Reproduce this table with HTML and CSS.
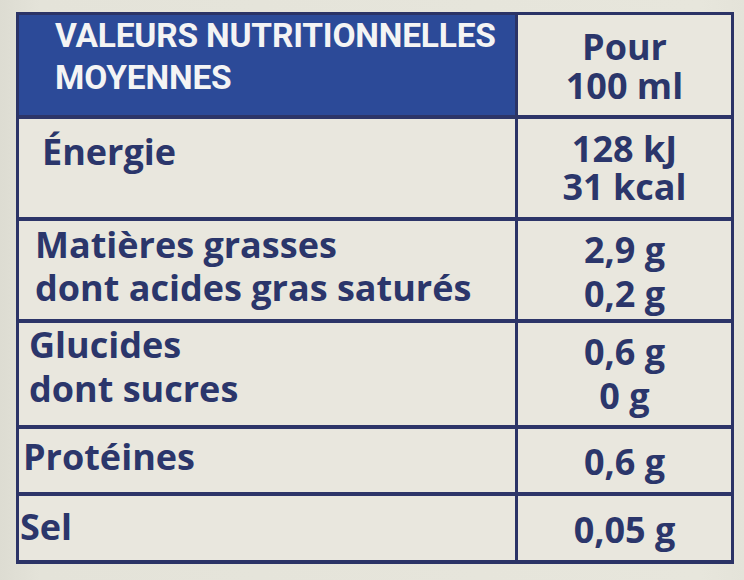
FILE: index.html
```html
<!DOCTYPE html>
<html lang="fr">
<head>
<meta charset="utf-8">
<title>Valeurs nutritionnelles moyennes</title>
<link rel="stylesheet" href="styles.css">
</head>
<body>
<div class="label">
  <div class="row row-head">
    <div class="cell name head-name">VALEURS NUTRITIONNELLES<br>MOYENNES</div>
    <div class="cell value head-value">Pour<br>100 ml</div>
  </div>
  <div class="row row-energy">
    <div class="cell name">Énergie</div>
    <div class="cell value">128 kJ<br>31 kcal</div>
  </div>
  <div class="row row-fat">
    <div class="cell name">Matières grasses<br>dont acides gras saturés</div>
    <div class="cell value">2,9 g<br>0,2 g</div>
  </div>
  <div class="row row-carb">
    <div class="cell name">Glucides<br>dont sucres</div>
    <div class="cell value">0,6 g<br>0 g</div>
  </div>
  <div class="row row-prot">
    <div class="cell name">Protéines</div>
    <div class="cell value">0,6 g</div>
  </div>
  <div class="row row-salt">
    <div class="cell name">Sel</div>
    <div class="cell value">0,05 g</div>
  </div>
</div>
</body>
</html>
```

FILE: styles.css
```css
html, body {
  margin: 0;
  padding: 0;
}
body {
  width: 744px;
  height: 580px;
  overflow: hidden;
  background: linear-gradient(90deg, #dddcd2 0px, #e4e3d9 40px, #e7e6dc 700px, #e4e3d9 744px);
  font-family: "Open Sans", Roboto, "Liberation Sans", sans-serif;
  color: #2b366b;
}
.label {
  margin: 12px 0 0 16px;
  width: 718px;
  box-sizing: border-box;
  border: 3px solid #2b3366;
  border-bottom-width: 4px;
  background: #e9e7de;
  display: flex;
  flex-direction: column;
}
.row {
  display: grid;
  grid-template-columns: 499px 1fr;
  border-top: 4px solid #2d3568;
  box-sizing: border-box;
}
.row-head { border-top: 0; height: 100px; }
.row-energy { height: 102px; }
.row-fat { height: 102px; }
.row-carb { height: 106px; }
.row-prot { height: 67px; }
.row-salt { height: 68px; }

.cell {
  font-weight: 700;
  font-size: 36px;
  line-height: 43px;
  letter-spacing: 0;
}
.name {
  border-right: 3px solid #2b3366;
  white-space: nowrap;
}
.value {
  text-align: center;
}
.head-name {
  background: #2c4a98;
  color: #f4f4f4;
  font-family: Roboto, "Liberation Sans", sans-serif;
  font-size: 33.5px;
  line-height: 42px;
  padding: 0 0 0 36px;
  letter-spacing: -0.2px;
}
.head-value {
  line-height: 39px;
  padding-top: 12px;
}
.row-energy .name { padding: 11px 0 0 23px; }
.row-energy .value { padding-top: 11px; line-height: 38px; }
.row-fat .name { padding: 2px 0 0 16px; }
.row-fat .value { padding-top: 7px; line-height: 44px; }
.row-carb .name { padding: 0 0 0 10px; line-height: 44px; }
.row-carb .value { padding-top: 7px; line-height: 44px; }
.row-prot .name { padding: 6px 0 0 4px; }
.row-prot .value { padding-top: 11px; }
.row-salt .name { padding: 9px 0 0 1px; }
.row-salt .value { padding-top: 12px; }
```
